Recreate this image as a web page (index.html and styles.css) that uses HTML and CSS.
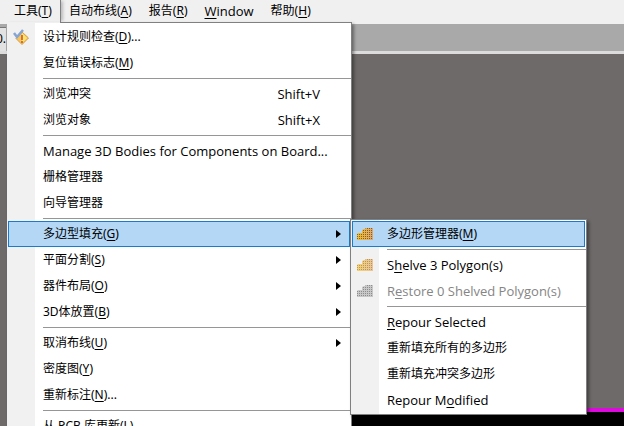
FILE: index.html
```
<!DOCTYPE html>
<html lang="zh-CN">
<head>
<meta charset="utf-8">
<title>PCB</title>
<link rel="stylesheet" href="styles.css">
</head>
<body>
<svg class="defs" aria-hidden="true">
  <defs>
    <pattern id="dots" width="2" height="2" patternUnits="userSpaceOnUse"><rect width="1" height="1" fill="currentColor"/></pattern>
    <linearGradient id="gold" x2="1"><stop offset="0" stop-color="#f2bd28"/><stop offset="1" stop-color="#dfa66c"/></linearGradient>
    <linearGradient id="pale" x2="1"><stop offset="0" stop-color="#f5d173"/><stop offset="1" stop-color="#ebc493"/></linearGradient>
  </defs>
</svg>
<div class="app">
  <nav class="menubar">
    <div class="tab-wrap">
      <button class="tab open">工具(<u>T</u>)</button>
      <div class="menu main">
        <button class="item"><svg class="icon check" viewBox="0 0 16 16"><path d="M9 3l6.500 6L9 15.500 3 9.500z" fill="#f6c65c" stroke="#d39d4c"/><path d="M9 4l5 5-5 5z" fill="#ffe36a"/><path d="M9 6v5M9 12v2" stroke="#c4502c" stroke-width="1.500"/><path d="M1 4l3 4 6-7" fill="none" stroke="#86a5d3" stroke-width="2.500"/></svg><span>设计规则检查(<u>D</u>)...</span></button>
        <button class="item"><span>复位错误标志(<u>M</u>)</span></button>
        <hr>
        <button class="item"><span>浏览冲突</span><kbd>Shift+V</kbd></button>
        <button class="item"><span>浏览对象</span><kbd>Shift+X</kbd></button>
        <hr>
        <button class="item latin"><span>Manage 3D Bodies for Components on Board...</span></button>
        <button class="item"><span>栅格管理器</span></button>
        <button class="item"><span>向导管理器</span></button>
        <hr>
        <div class="sub-wrap">
          <button class="item active"><span>多边型填充(<u>G</u>)</span><i class="arrow"></i></button>
          <div class="menu sub">
            <button class="item active"><svg class="icon gold" viewBox="0 0 16 12"><path d="M0 6l1-1h4V2l2-1h1l1-1h7v12H0z"/><path class="dots" d="M0 6l1-1h4V2l2-1h1l1-1h7v12H0z"/></svg><span>多边形管理器(<u>M</u>)</span></button>
            <hr>
            <button class="item latin"><svg class="icon pale" viewBox="0 0 16 12"><path d="M0 6l1-1h4V2l2-1h1l1-1h7v12H0z"/><path class="dots" d="M0 6l1-1h4V2l2-1h1l1-1h7v12H0z"/></svg><span>S<u>h</u>elve 3 Polygon(s)</span></button>
            <button class="item latin" disabled><svg class="icon gray" viewBox="0 0 16 12"><path d="M0 6l1-1h4V2l2-1h1l1-1h7v12H0z"/><path class="dots" d="M0 6l1-1h4V2l2-1h1l1-1h7v12H0z"/></svg><span>R<u>e</u>store 0 Shelved Polygon(s)</span></button>
            <hr>
            <button class="item latin"><span><u>R</u>epour Selected</span></button>
            <button class="item"><span>重新填充所有的多边形</span></button>
            <button class="item"><span>重新填充冲突多边形</span></button>
            <button class="item latin"><span>Repour M<u>o</u>dified</span></button>
          </div>
        </div>
        <button class="item"><span>平面分割(<u>S</u>)</span><i class="arrow"></i></button>
        <button class="item"><span>器件布局(<u>O</u>)</span><i class="arrow"></i></button>
        <button class="item"><span>3D体放置(<u>B</u>)</span><i class="arrow"></i></button>
        <hr>
        <button class="item"><span>取消布线(<u>U</u>)</span><i class="arrow"></i></button>
        <button class="item"><span>密度图(<u>Y</u>)</span></button>
        <button class="item"><span>重新标注(<u>N</u>)...</span></button>
        <hr>
        <button class="item"><span>从 PCB 库更新(<u>L</u>)</span></button>
      </div>
    </div>
    <button class="tab">自动布线(<u>A</u>)</button>
    <button class="tab">报告(<u>R</u>)</button>
    <button class="tab latin"><u>W</u>indow</button>
    <button class="tab">帮助(<u>H</u>)</button>
  </nav>
  <div class="documents"><span class="document">0.</span></div>
  <main class="canvas"><div class="board"></div></main>
</div>
</body>
</html>
```
FILE: styles.css
```
* { box-sizing: border-box; }
body {
  margin: 0;
  overflow: hidden;
  font: 12px/16px "Noto Sans", "Noto Sans CJK SC", sans-serif;
  color: #000;
}
button { font: inherit; color: inherit; background: none; border: 0; padding: 0; text-align: left; white-space: nowrap; }
u { text-decoration: underline; text-underline-offset: 2px; text-decoration-thickness: 1px; text-decoration-skip-ink: none; }
.defs { position: absolute; width: 0; height: 0; }
.app { height: 100vh; display: flex; flex-direction: column; }
.menubar { height: 24px; flex: none; display: flex; background: #f0f0f0; padding-left: 6px; }
.tab-wrap { position: relative; }
.tab { height: 22px; padding: 0 9px 0 8px; }
.tab.open { padding-right: 8px; border-right: 1px solid #808080; box-shadow: 3px 0 3px -1px #bbb; }
.documents { height: 30px; flex: none; display: flex; background: #a9a9a9; border-bottom: 3px solid #dcdcdc; padding-top: 3px; }
.document { width: 6px; display: flex; justify-content: flex-end; overflow: hidden; background: #e2e2e2; border-top: 1px solid #777; line-height: 22px; }
.canvas { flex: 1; display: flex; align-items: flex-end; background: #6e6a69; padding-left: 32px; }
.board { flex: 1; height: 18px; background: #000; border-top: 4px solid #dc0adc; }
.menu {
  position: absolute;
  background: linear-gradient(90deg, #f1f1f1 28px, #fff 28px);
  border: 1px solid #808080;
  box-shadow: 2px 2px 3px #0006;
  padding: 1px 0;
}
.main { top: 22px; left: 1px; width: 345px; z-index: 1; border-left: 0; }
.main::before { content: ""; position: absolute; top: -1px; left: 0; width: 53px; height: 1px; background: #f0f0f0; }
.sub-wrap { position: relative; }
.sub { top: -2px; left: 343px; width: 237px; z-index: 2; }
.item { position: relative; display: flex; align-items: center; width: 100%; height: 26px; padding: 0 9px 0 36px; }
.main > .item, .sub-wrap > .item { padding-right: 10px; }
.item span { flex: 1; }
.item:disabled { color: #858585; }
.latin, kbd { font-family: "Open Sans", "Noto Sans", sans-serif; font-size: 13px; }
kbd { padding-right: 21px; }
.active::before { content: ""; position: absolute; inset: 0 1px; background: #b3d7f5; border: 1px solid #1b7bc8; z-index: 0; }
.active > * { position: relative; }
.arrow { width: 0; height: 0; border: 4px solid transparent; border-left: 5px solid #000; border-right: 0; }
hr { margin: 2px 0 2px 36px; border: 0; height: 1px; background: #969696; }
.icon { width: 16px; height: 12px; margin-left: -30px; margin-right: 14px; flex: none; }
.check { height: 16px; }
.icon .dots { fill: url(#dots); color: inherit; opacity: .45; }
.gold { fill: url(#gold); }
.pale { fill: url(#pale); }
.pale .dots { opacity: .25; }
.gray { fill: #c8c8c8; }
.gray .dots { opacity: .3; }
```
